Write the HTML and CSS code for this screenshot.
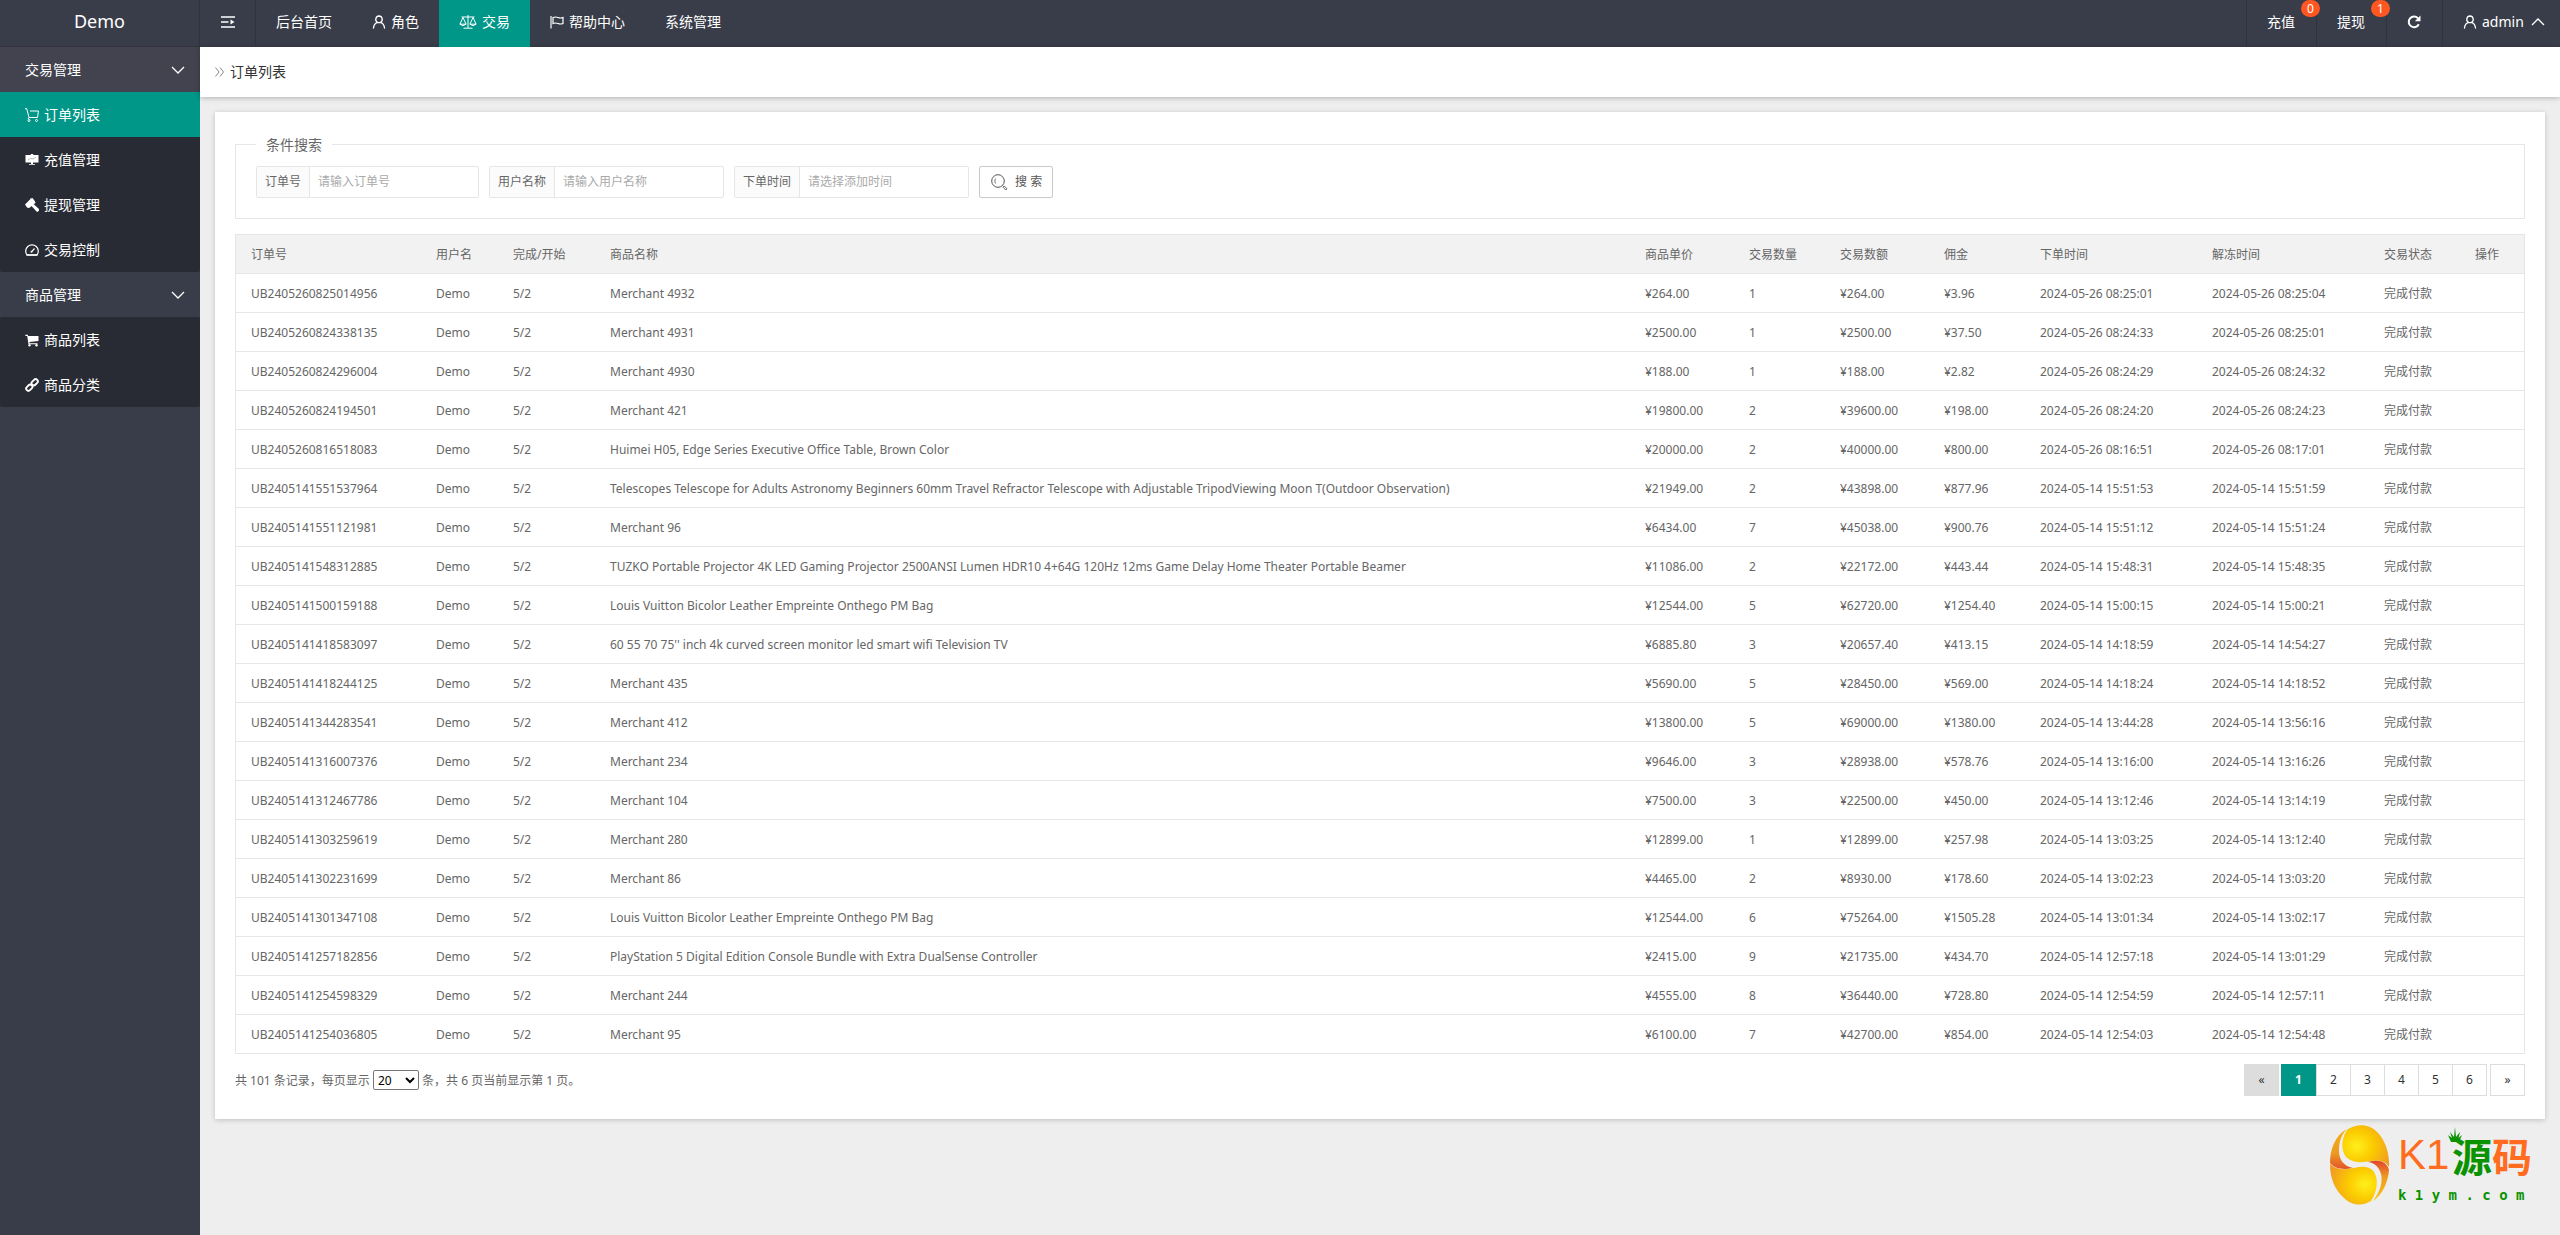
FILE: index.html
```html
<!DOCTYPE html>
<html lang="zh-CN">
<head>
<meta charset="utf-8">
<title>订单列表</title>
<link rel="stylesheet" href="styles.css">
</head>
<body>
<svg class="sprite" aria-hidden="true">
  <symbol id="i-user" viewBox="0 0 14 14"><path d="M7 1a3.4 3.4 0 0 1 1.600 6.300C11 8.200 12.200 10 12.500 13M7 1a3.400 3.400 0 0 0-1.600 6.300C3 8.200 1.800 10 1.500 13M5.400 7.300q1.600.8 3.200 0" fill="none" stroke="currentColor" stroke-width="1.300" stroke-linecap="round"/></symbol>
  <symbol id="i-down" viewBox="0 0 14 14"><path d="M1 4l6 6 6-6" fill="none" stroke="currentColor" stroke-width="1.300"/></symbol>
  <symbol id="i-up" viewBox="0 0 14 14"><path d="M1 10l6-6 6 6" fill="none" stroke="currentColor" stroke-width="1.300"/></symbol>
</svg>
<div class="app">
  <aside class="side">
    <a class="logo" href="#">Demo</a>
    <nav>
      <a class="group current" href="#">交易管理<svg class="ic"><use href="#i-down"/></svg></a>
      <div class="sub">
        <a class="on" href="#"><svg class="ic" viewBox="0 0 14 14"><path d="M0 .7h1.700L4 9.500h8.500L13.500 3H5M4 9.500l-1 1.500" fill="none" stroke="currentColor"/><circle cx="4" cy="12.500" r="1" fill="none" stroke="currentColor"/><circle cx="11.500" cy="12.500" r="1" fill="none" stroke="currentColor"/></svg>订单列表</a>
        <a href="#"><svg class="ic" viewBox="0 0 14 14"><path d="M.5 2h5L6 1h2l.5 1h5v7.500h-5.500v1.500h2v.8H4v-.8h2V9.500H.5z" fill="currentColor"/><path d="M3 7l2.500-1.500L8 6l3-2" fill="none" stroke="#9a9ca0" stroke-width=".7"/></svg>充值管理</a>
        <a href="#"><svg class="ic" viewBox="0 0 14 14"><path d="M0 6.500L1 5.500 5 1.500 5.500.5 7.500 0 9 2l1.500 2.500-.5 1-1.500.5 5.500 5v1.500L12.500 14 11.500 13.500 6.500 8l-1.500 1.500L3.500 10 2 9.500 1 8z" fill="currentColor"/></svg>提现管理</a>
        <a href="#"><svg class="ic" viewBox="0 0 14 14"><path d="M2 12A6.300 6.300 0 1 1 12 12M6.500 8.800l3-3.300" fill="none" stroke="currentColor" stroke-width="1.200"/><circle cx="6.500" cy="8.800" r="1" fill="currentColor"/><path d="M1.500 12h11" stroke="currentColor" stroke-width="1.800"/></svg>交易控制</a>
      </div>
      <a class="group" href="#">商品管理<svg class="ic"><use href="#i-down"/></svg></a>
      <div class="sub">
        <a href="#"><svg class="ic" viewBox="0 0 14 14"><path d="M.3 1.800h2.500l.4 1.200H13.500v5L4.500 9v1.200H12.500v1H3.500L2.200 2.900H.3z" fill="currentColor"/><circle cx="4.500" cy="12.300" r="1.200" fill="currentColor"/><circle cx="11.500" cy="12.300" r="1.200" fill="currentColor"/></svg>商品列表</a>
        <a href="#"><svg class="ic" viewBox="0 0 14 14"><g fill="none" stroke="currentColor" stroke-width="1.900"><rect x="-3.500" y="-2.200" width="7" height="4.400" rx="2.200" transform="translate(9.700 4.300) rotate(-45)"/><rect x="-3.500" y="-2.200" width="7" height="4.400" rx="2.200" transform="translate(4.300 9.700) rotate(-45)"/></g></svg>商品分类</a>
      </div>
    </nav>
  </aside>
  <div class="page">
    <header class="top">
      <nav class="menu">
        <button class="toggle" type="button" aria-label="菜单"><svg class="ic" viewBox="0 0 14 14"><path d="M0 2h14M0 7h7.500M0 12h14" stroke="currentColor" stroke-width="1.600"/><path d="M9.500 4.500v5L13.500 7z" fill="currentColor"/></svg></button>
        <a href="#">后台首页</a>
        <a href="#"><svg class="ic"><use href="#i-user"/></svg>角色</a>
        <a class="on" href="#"><svg class="ic wide" viewBox="0 0 18 14"><path d="M2.500 2h13M9 0v13M4.500 13.200h9M4 2.500L1 9M4 2.500L7 9M14 2.500L11 9M14 2.500L17 9M.8 9.200h6.400q-3.200 3-6.400 0zM10.800 9.200h6.400q-3.200 3-6.400 0z" fill="none" stroke="currentColor"/></svg>交易</a>
        <a href="#"><svg class="ic" viewBox="0 0 14 14"><path d="M1 1v12.500M3 2.500q2.500-1 5 0t5 0v6q-2.500 1-5 0t-5 0z" fill="none" stroke="currentColor" stroke-width="1.200"/></svg>帮助中心</a>
        <a href="#">系统管理</a>
      </nav>
      <nav class="tools">
        <a href="#">充值<span class="badge">0</span></a>
        <a href="#">提现<span class="badge">1</span></a>
        <a href="#" aria-label="刷新"><svg class="ic" viewBox="0 0 14 14"><path d="M11.800 9.200A5.300 5.300 0 1 1 11 3.300" fill="none" stroke="currentColor" stroke-width="2"/><path d="M13.500.5v5.800H7.800z" fill="currentColor"/></svg></a>
        <a class="account" href="#"><svg class="ic"><use href="#i-user"/></svg>admin<svg class="ic caret"><use href="#i-up"/></svg></a>
      </nav>
    </header>
    <div class="crumb"><svg viewBox="0 0 9 10"><path d="M.5.5L4 5 .5 9.500M5 .5L8.500 5 5 9.500" fill="none" stroke="currentColor"/></svg><h1>订单列表</h1></div>
    <main class="card">
      <form>
        <fieldset class="search">
          <legend>条件搜索</legend>
          <div class="fields">
            <div class="field"><label for="no">订单号</label><input id="no" type="text" placeholder="请输入订单号"></div>
            <div class="field"><label for="name">用户名称</label><input id="name" type="text" placeholder="请输入用户名称"></div>
            <div class="field"><label for="time">下单时间</label><input id="time" type="text" placeholder="请选择添加时间"></div>
            <button class="submit" type="submit"><svg viewBox="0 0 17 17"><circle cx="7" cy="7" r="6.300" fill="none" stroke="currentColor"/><path d="M4.500 4.500q-1.500 2.500 0 5" fill="none" stroke="currentColor" stroke-width=".8"/><path d="M11.500 11.500l1 1M13.200 12l2.800 2.800-1.200 1.200-2.800-2.800z" fill="none" stroke="currentColor" stroke-width=".9"/></svg>搜 索</button>
          </div>
        </fieldset>
      </form>
      <table class="orders">
        <colgroup><col class="c-no"><col class="c-user"><col class="c-step"><col><col class="c-price"><col class="c-count"><col class="c-price"><col class="c-fee"><col class="c-time"><col class="c-time"><col class="c-state"><col class="c-act"></colgroup>
        <thead><tr><th>订单号</th><th>用户名</th><th>完成/开始</th><th>商品名称</th><th>商品单价</th><th>交易数量</th><th>交易数额</th><th>佣金</th><th>下单时间</th><th>解冻时间</th><th>交易状态</th><th>操作</th></tr></thead>
        <tbody>
<tr><td>UB2405260825014956</td><td>Demo</td><td>5/2</td><td>Merchant 4932</td><td>¥264.00</td><td>1</td><td>¥264.00</td><td>¥3.96</td><td>2024-05-26 08:25:01</td><td>2024-05-26 08:25:04</td><td>完成付款</td><td></td></tr>
<tr><td>UB2405260824338135</td><td>Demo</td><td>5/2</td><td>Merchant 4931</td><td>¥2500.00</td><td>1</td><td>¥2500.00</td><td>¥37.50</td><td>2024-05-26 08:24:33</td><td>2024-05-26 08:25:01</td><td>完成付款</td><td></td></tr>
<tr><td>UB2405260824296004</td><td>Demo</td><td>5/2</td><td>Merchant 4930</td><td>¥188.00</td><td>1</td><td>¥188.00</td><td>¥2.82</td><td>2024-05-26 08:24:29</td><td>2024-05-26 08:24:32</td><td>完成付款</td><td></td></tr>
<tr><td>UB2405260824194501</td><td>Demo</td><td>5/2</td><td>Merchant 421</td><td>¥19800.00</td><td>2</td><td>¥39600.00</td><td>¥198.00</td><td>2024-05-26 08:24:20</td><td>2024-05-26 08:24:23</td><td>完成付款</td><td></td></tr>
<tr><td>UB2405260816518083</td><td>Demo</td><td>5/2</td><td>Huimei H05, Edge Series Executive Office Table, Brown Color</td><td>¥20000.00</td><td>2</td><td>¥40000.00</td><td>¥800.00</td><td>2024-05-26 08:16:51</td><td>2024-05-26 08:17:01</td><td>完成付款</td><td></td></tr>
<tr><td>UB2405141551537964</td><td>Demo</td><td>5/2</td><td>Telescopes Telescope for Adults Astronomy Beginners 60mm Travel Refractor Telescope with Adjustable TripodViewing Moon T(Outdoor Observation)</td><td>¥21949.00</td><td>2</td><td>¥43898.00</td><td>¥877.96</td><td>2024-05-14 15:51:53</td><td>2024-05-14 15:51:59</td><td>完成付款</td><td></td></tr>
<tr><td>UB2405141551121981</td><td>Demo</td><td>5/2</td><td>Merchant 96</td><td>¥6434.00</td><td>7</td><td>¥45038.00</td><td>¥900.76</td><td>2024-05-14 15:51:12</td><td>2024-05-14 15:51:24</td><td>完成付款</td><td></td></tr>
<tr><td>UB2405141548312885</td><td>Demo</td><td>5/2</td><td>TUZKO Portable Projector 4K LED Gaming Projector 2500ANSI Lumen HDR10 4+64G 120Hz 12ms Game Delay Home Theater Portable Beamer</td><td>¥11086.00</td><td>2</td><td>¥22172.00</td><td>¥443.44</td><td>2024-05-14 15:48:31</td><td>2024-05-14 15:48:35</td><td>完成付款</td><td></td></tr>
<tr><td>UB2405141500159188</td><td>Demo</td><td>5/2</td><td>Louis Vuitton Bicolor Leather Empreinte Onthego PM Bag</td><td>¥12544.00</td><td>5</td><td>¥62720.00</td><td>¥1254.40</td><td>2024-05-14 15:00:15</td><td>2024-05-14 15:00:21</td><td>完成付款</td><td></td></tr>
<tr><td>UB2405141418583097</td><td>Demo</td><td>5/2</td><td>60 55 70 75'' inch 4k curved screen monitor led smart wifi Television TV</td><td>¥6885.80</td><td>3</td><td>¥20657.40</td><td>¥413.15</td><td>2024-05-14 14:18:59</td><td>2024-05-14 14:54:27</td><td>完成付款</td><td></td></tr>
<tr><td>UB2405141418244125</td><td>Demo</td><td>5/2</td><td>Merchant 435</td><td>¥5690.00</td><td>5</td><td>¥28450.00</td><td>¥569.00</td><td>2024-05-14 14:18:24</td><td>2024-05-14 14:18:52</td><td>完成付款</td><td></td></tr>
<tr><td>UB2405141344283541</td><td>Demo</td><td>5/2</td><td>Merchant 412</td><td>¥13800.00</td><td>5</td><td>¥69000.00</td><td>¥1380.00</td><td>2024-05-14 13:44:28</td><td>2024-05-14 13:56:16</td><td>完成付款</td><td></td></tr>
<tr><td>UB2405141316007376</td><td>Demo</td><td>5/2</td><td>Merchant 234</td><td>¥9646.00</td><td>3</td><td>¥28938.00</td><td>¥578.76</td><td>2024-05-14 13:16:00</td><td>2024-05-14 13:16:26</td><td>完成付款</td><td></td></tr>
<tr><td>UB2405141312467786</td><td>Demo</td><td>5/2</td><td>Merchant 104</td><td>¥7500.00</td><td>3</td><td>¥22500.00</td><td>¥450.00</td><td>2024-05-14 13:12:46</td><td>2024-05-14 13:14:19</td><td>完成付款</td><td></td></tr>
<tr><td>UB2405141303259619</td><td>Demo</td><td>5/2</td><td>Merchant 280</td><td>¥12899.00</td><td>1</td><td>¥12899.00</td><td>¥257.98</td><td>2024-05-14 13:03:25</td><td>2024-05-14 13:12:40</td><td>完成付款</td><td></td></tr>
<tr><td>UB2405141302231699</td><td>Demo</td><td>5/2</td><td>Merchant 86</td><td>¥4465.00</td><td>2</td><td>¥8930.00</td><td>¥178.60</td><td>2024-05-14 13:02:23</td><td>2024-05-14 13:03:20</td><td>完成付款</td><td></td></tr>
<tr><td>UB2405141301347108</td><td>Demo</td><td>5/2</td><td>Louis Vuitton Bicolor Leather Empreinte Onthego PM Bag</td><td>¥12544.00</td><td>6</td><td>¥75264.00</td><td>¥1505.28</td><td>2024-05-14 13:01:34</td><td>2024-05-14 13:02:17</td><td>完成付款</td><td></td></tr>
<tr><td>UB2405141257182856</td><td>Demo</td><td>5/2</td><td>PlayStation 5 Digital Edition Console Bundle with Extra DualSense Controller</td><td>¥2415.00</td><td>9</td><td>¥21735.00</td><td>¥434.70</td><td>2024-05-14 12:57:18</td><td>2024-05-14 13:01:29</td><td>完成付款</td><td></td></tr>
<tr><td>UB2405141254598329</td><td>Demo</td><td>5/2</td><td>Merchant 244</td><td>¥4555.00</td><td>8</td><td>¥36440.00</td><td>¥728.80</td><td>2024-05-14 12:54:59</td><td>2024-05-14 12:57:11</td><td>完成付款</td><td></td></tr>
<tr><td>UB2405141254036805</td><td>Demo</td><td>5/2</td><td>Merchant 95</td><td>¥6100.00</td><td>7</td><td>¥42700.00</td><td>¥854.00</td><td>2024-05-14 12:54:03</td><td>2024-05-14 12:54:48</td><td>完成付款</td><td></td></tr>
        </tbody>
      </table>
      <div class="foot">
        <label for="size">共 101 条记录，每页显示 <select id="size"><option>20</option><option>50</option><option>100</option></select> 条，共 6 页当前显示第 1 页。</label>
        <nav class="pager">
          <a class="prev" href="#">«</a><a class="cur" href="#">1</a><a href="#">2</a><a href="#">3</a><a href="#">4</a><a href="#">5</a><a href="#">6</a><a class="next" href="#">»</a>
        </nav>
      </div>
    </main>
  </div>
</div>
<div class="mark">
  <svg class="egg" viewBox="0 0 60 80">
    <defs>
      <radialGradient id="g1" cx=".3" cy=".5" r=".8"><stop offset="0" stop-color="#fff01a"/><stop offset=".45" stop-color="#fbcb00"/><stop offset="1" stop-color="#f09a22"/></radialGradient>
      <radialGradient id="g2" cx=".75" cy=".5" r=".8"><stop offset="0" stop-color="#fff01a"/><stop offset=".45" stop-color="#fbcb00"/><stop offset="1" stop-color="#f09a22"/></radialGradient>
      <linearGradient id="g3" x2="0" y2="1"><stop offset="0" stop-color="#f3b016"/><stop offset=".6" stop-color="#ee9a22"/><stop offset="1" stop-color="#e2542a"/></linearGradient>
      <linearGradient id="g4" x2="0" y2="1"><stop offset="0" stop-color="#e2442a"/><stop offset=".4" stop-color="#ee9a22"/><stop offset="1" stop-color="#f8c810"/></linearGradient>
    </defs>
    <path d="M18 4C25 0 33-1 40 2C53 8 60 26 59 42C56 36 49 35 41 36C31 38 23 38 16 32C10 24 12 11 18 4z" fill="url(#g1)"/>
    <path d="M17 4C5 10 0 25 0 38C5 44 13 45 23 43C13 41 9 34 9 26C9 17 11 10 17 4z" fill="url(#g3)"/>
    <path d="M0 39C6 45 15 45 24 43C32 41 40 41 44 47C49 55 47 67 41 76C31 82 21 80 14 73C4 64 0 52 0 39z" fill="url(#g2)"/>
    <path d="M38 37C49 34 57 37 59 45C58 58 52 70 43 76C50 67 53 57 51 49C49 42 45 38 38 37z" fill="url(#g4)"/>
  </svg>
  <div>
    <div class="brand"><span class="thin">K1</span><span class="green">源</span><span>码</span><svg class="crown" viewBox="0 0 14 15"><path d="M3 15L0 8l4 3-2-6 4 5L7 0l1 10 4-5-1.500 6L14 8l-3 7z" fill="#0a9200"/></svg></div>
    <div class="site">k 1 y m . c o m</div>
  </div>
</div>
</body>
</html>
```
FILE: styles.css
```css
* { box-sizing: border-box; }
body {
  margin: 0;
  background: #eee;
  color: #666;
  font: 12px/20px "Noto Sans", "Noto Sans CJK SC", sans-serif;
}
a { color: inherit; text-decoration: none; }
button, input, select { font: inherit; color: inherit; }
.sprite { display: none; }
.ic { width: 14px; height: 14px; flex: none; }
.ic.wide { width: 18px; }

.app { display: flex; min-height: 100vh; }
.side { width: 200px; flex: none; background: #393d49; color: #fff; font-size: 14px; }
.logo {
  display: block;
  height: 47px;
  border-right: 1px solid #30333d;
  border-bottom: 1px solid #30333d;
  font-size: 18px;
  line-height: 43px;
  text-align: center;
}
.side nav a { display: flex; align-items: center; height: 45px; padding: 0 15px 0 25px; }
.side .group { justify-content: space-between; }
.side .group.current { background: #42434e; }
.sub { background: #282b33; border-radius: 2px; }
.sub a { gap: 5px; }
.sub .on { background: #009688; }

.page { flex: 1; min-width: 0; }
.top { display: flex; justify-content: space-between; height: 47px; background: #393d49; color: #fff; font-size: 14px; }
.menu, .tools { display: flex; }
.top a { display: flex; align-items: center; gap: 5px; padding: 0 20px 4px; }
.menu .on { background: #009688; }
.toggle {
  display: flex;
  align-items: center;
  width: 56px;
  padding: 0 20px 4px 21px;
  border: 0;
  border-right: 1px solid #30333d;
  background: none;
}
.tools a { position: relative; padding-right: 21px; border-left: 1px solid #30333d; }
.tools .account { min-width: 118px; padding-right: 15px; }
.caret { margin-left: auto; }
.badge {
  position: absolute;
  top: 0;
  right: -4px;
  z-index: 1;
  width: 19px;
  height: 17px;
  border-radius: 9px;
  background: #ff5722;
  font-size: 12px;
  line-height: 17px;
  text-align: center;
}

.crumb {
  display: flex;
  align-items: center;
  gap: 6px;
  height: 50px;
  padding: 0 15px;
  background: #fff;
  box-shadow: 0 1px 5px rgba(0, 0, 0, .25);
}
.crumb svg { width: 9px; height: 10px; color: #888; }
.crumb h1 { margin: 0; color: #333; font-size: 14px; font-weight: 400; }

.card { margin: 15px; padding: 20px 20px 23px; background: #fff; box-shadow: 0 1px 5px rgba(0, 0, 0, .2); }
.search { margin: 0 0 15px; padding: 9px 20px 20px; border: 1px solid #e6e6e6; }
.search legend { padding: 0 10px; font-size: 14px; line-height: 25px; }
.fields { display: flex; gap: 10px; }
.field { display: flex; height: 32px; border: 1px solid #e6e6e6; border-radius: 2px; }
.field label { padding: 0 8px; border-right: 1px solid #e6e6e6; background: #fbfbfb; line-height: 30px; }
.field input { width: 168px; padding: 0 8px; border: 0; background: none; outline: 0; }
.field input::placeholder { color: #aaa; }
.submit {
  display: flex;
  align-items: center;
  gap: 7px;
  height: 32px;
  padding: 0 10px 0 11px;
  border: 1px solid #c9c9c9;
  border-radius: 2px;
  background: #fff;
  color: #555;
}
.submit svg { width: 17px; height: 17px; }

.orders {
  width: 100%;
  table-layout: fixed;
  border-collapse: separate;
  border-spacing: 0;
  border: 1px solid #e6e6e6;
  border-bottom: 0;
}
.orders th, .orders td {
  height: 39px;
  padding: 2px 15px 0;
  border-bottom: 1px solid #e6e6e6;
  font-weight: 400;
  text-align: left;
  white-space: nowrap;
}
.orders thead { background: #f2f2f2; }
.c-no { width: 185px; }
.c-user { width: 77px; }
.c-step { width: 97px; }
.c-price { width: 104px; }
.c-count { width: 91px; }
.c-fee { width: 96px; }
.c-time { width: 172px; }
.c-state { width: 91px; }
.c-act { width: 64px; }

.foot { display: flex; justify-content: space-between; align-items: center; padding-top: 10px; }
.foot select { width: 46px; height: 20px; padding: 0; border: 1px solid #767676; border-radius: 2px; background: #fff; color: #000; }
.pager { display: flex; color: #333; }
.pager a { width: 35px; height: 32px; margin-left: -1px; border: 1px solid #ddd; line-height: 30px; text-align: center; }
.pager .prev { margin-right: 3px; background: #ddd; }
.pager .cur { margin-right: 1px; border-color: #009688; background: #009688; color: #fff; font-weight: 700; }
.pager .next { margin-left: 3px; }

.mark { position: absolute; right: 28px; bottom: 30px; display: flex; gap: 8px; color: #ff6c20; }
.egg { width: 60px; height: 80px; }
.brand { position: relative; display: flex; height: 60px; font: 700 40px/60px "Noto Sans CJK SC", sans-serif; }
.brand .thin { width: 54px; font: 400 42px/60px "Liberation Sans", sans-serif; }
.green, .site { color: #0a9200; }
.crown { position: absolute; left: 50px; top: 2px; width: 14px; height: 15px; }
.site { font: 700 14px/20px "DejaVu Sans Mono", monospace; }
```
